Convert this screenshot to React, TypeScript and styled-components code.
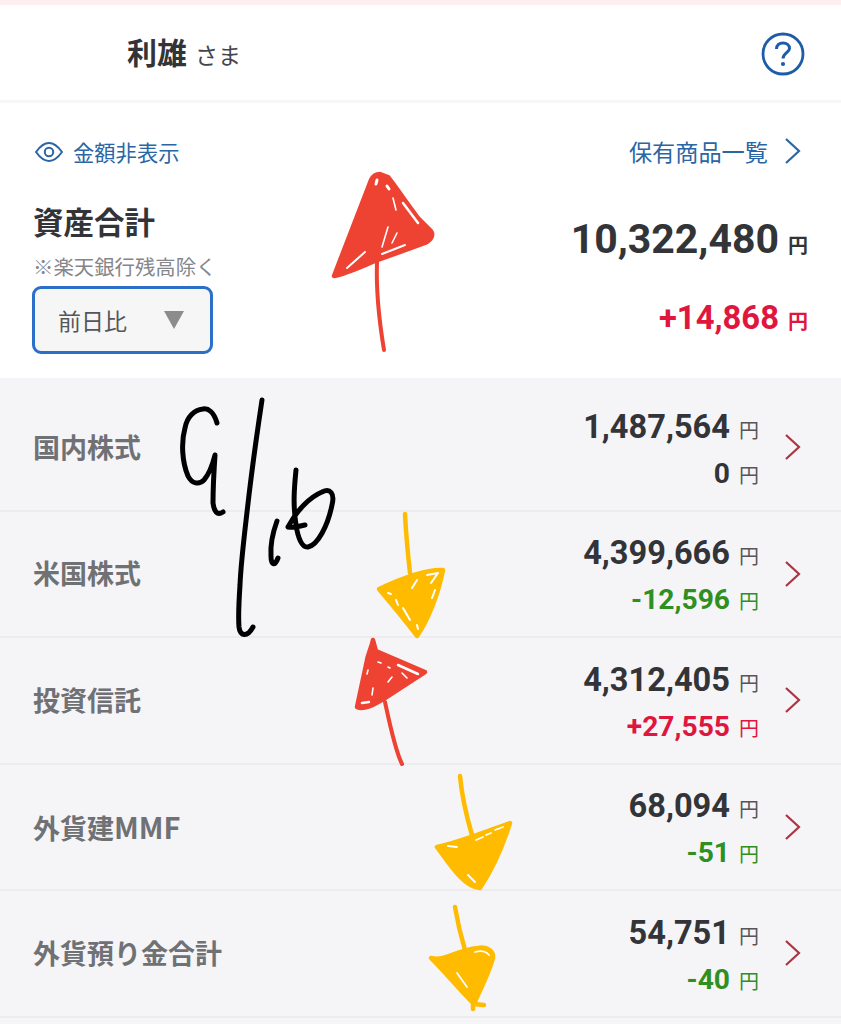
import React from 'react';
import styled, { createGlobalStyle } from 'styled-components';

type Asset = {
  name: string;
  latin?: string;
  amount: string;
  diff: string;
  tone: 'flat' | 'up' | 'down';
};

const assets: Asset[] = [
  { name: '国内株式', amount: '1,487,564', diff: '0', tone: 'flat' },
  { name: '米国株式', amount: '4,399,666', diff: '-12,596', tone: 'down' },
  { name: '投資信託', amount: '4,312,405', diff: '+27,555', tone: 'up' },
  { name: '外貨建', latin: 'MMF', amount: '68,094', diff: '-51', tone: 'down' },
  { name: '外貨預り金合計', amount: '54,751', diff: '-40', tone: 'down' },
];

const toneColors = { flat: '#333438', up: '#e0163f', down: '#2f8f1f' };

const GlobalStyle = createGlobalStyle`
  html, body {
    margin: 0;
    padding: 0;
    background: #f5f5f8;
  }
  body {
    font-family: Roboto, "Noto Sans CJK JP", sans-serif;
  }
`;

const Page = styled.div`
  position: relative;
  width: 841px;
  height: 1024px;
  overflow: hidden;
  background: #f5f5f8;
`;

const TopStripe = styled.div`
  height: 5px;
  background: #fdeef0;
`;

const Header = styled.header`
  display: flex;
  align-items: center;
  justify-content: space-between;
  height: 95px;
  padding: 0 36px 0 127px;
  background: #fff;
  border-bottom: 3px solid #f7f7f7;
`;

const UserName = styled.div`
  display: flex;
  align-items: baseline;
  gap: 8px;
  margin-top: -3px;
  color: #333438;
`;

const Surname = styled.span`
  font-size: 30px;
  font-weight: 700;
  font-family: "Noto Sans CJK JP", sans-serif;
`;

const Honorific = styled.span`
  font-size: 23px;
  color: #44454a;
  font-family: "Noto Sans CJK JP", sans-serif;
`;

const HelpIcon = styled.svg`
  margin-top: 2px;
`;

const Summary = styled.section`
  background: #fff;
  height: 275px;
  padding: 34px 33px 0;
  box-sizing: border-box;
`;

const LinkRow = styled.div`
  display: flex;
  justify-content: space-between;
  align-items: center;
  height: 28px;
`;

const BlueLink = styled.a`
  display: flex;
  align-items: center;
  color: #2a65a5;
  font-size: 21.3px;
  font-family: "Noto Sans CJK JP", sans-serif;
`;

const WideLink = styled(BlueLink)`
  font-size: 23.2px;
  gap: 16px;
  margin-right: 7px;
`;

const EyeIcon = styled.svg`
  width: 30px;
  height: 22px;
  margin: 1px 9px 0 1px;
`;

const TotalBody = styled.div`
  display: flex;
  justify-content: space-between;
  margin-top: 35px;
`;

const TotalLeft = styled.div`
  display: flex;
  flex-direction: column;
  align-items: flex-start;
`;

const TotalTitle = styled.h2`
  margin: 0;
  font-size: 30.5px;
  line-height: 42px;
  font-weight: 700;
  color: #333438;
  font-family: "Noto Sans CJK JP", sans-serif;
`;

const TotalNote = styled.p`
  margin: 10px 0 0;
  font-size: 20.4px;
  line-height: 28px;
  color: #85868a;
  font-family: "Noto Sans CJK JP", sans-serif;
`;

const PeriodSelect = styled.div`
  display: flex;
  align-items: center;
  justify-content: space-between;
  box-sizing: border-box;
  width: 181px;
  height: 68px;
  margin: 6px 0 0 -1px;
  padding: 0 26px 0 23px;
  background: #f6f6f7;
  border: 3px solid #2b6fc8;
  border-radius: 9px;
  color: #55565a;
  font-size: 23px;
  font-family: "Noto Sans CJK JP", sans-serif;
`;

const SelectCaret = styled.span`
  width: 0;
  height: 0;
  border-left: 10px solid transparent;
  border-right: 10px solid transparent;
  border-top: 18px solid #8c8c8e;
`;

const TotalRight = styled.div`
  display: flex;
  flex-direction: column;
  align-items: flex-end;
  margin-top: 14px;
  gap: 27px;
`;

const Money = styled.div<{ $size: number; $color: string }>`
  display: flex;
  align-items: baseline;
  gap: 9px;
  font-size: ${(p) => p.$size}px;
  line-height: ${(p) => Math.round(p.$size) + 9}px;
  font-weight: 700;
  color: ${(p) => p.$color};
`;

const Yen = styled.span<{ $bold?: boolean; $color?: string }>`
  font-size: 20px;
  font-weight: ${(p) => (p.$bold ? 700 : 400)};
  color: ${(p) => p.$color || 'inherit'};
  font-family: "Noto Sans CJK JP", sans-serif;
`;

const AssetList = styled.ul`
  list-style: none;
  margin: 0;
  padding: 7px 0 0;
`;

const AssetRow = styled.li`
  display: flex;
  align-items: center;
  justify-content: space-between;
  box-sizing: border-box;
  height: 126.5px;
  padding: 0 40px 0 33px;
  border-bottom: 2px solid #ececee;
`;

const AssetName = styled.span`
  margin-top: -2px;
  font-size: 27px;
  font-weight: 700;
  color: #707175;
  font-family: "Noto Sans CJK JP", sans-serif;
`;

const AssetLatin = styled.span`
  font-size: 29px;
`;

const AssetRight = styled.div`
  display: flex;
  align-items: center;
  gap: 25px;
`;

const AssetValues = styled.div`
  display: flex;
  flex-direction: column;
  align-items: flex-end;
  gap: 4px;
  padding-top: 4px;
`;

const Annotation = styled.svg`
  position: absolute;
  left: 0;
  top: 0;
  width: 841px;
  height: 1024px;
  pointer-events: none;
`;

const Chevron = ({ color }: { color: string }) => (
  <svg width="17" height="28" viewBox="0 0 17 28" fill="none">
    <path d="M2 2 L15 14 L2 26" stroke={color} strokeWidth="2.2" />
  </svg>
);

const Scribbles = () => (
  <Annotation viewBox="0 0 841 1024" fill="none" strokeLinecap="round" strokeLinejoin="round">
    {/* black date */}
    <g stroke="#000" strokeWidth="5">
      <path d="M217 423 C214 412 208 408 203 409 C194 410 187 417 185 428 C181 442 182 462 188 476 C192 484 199 485 204 480 C210 473 213 463 215 455 C214 470 213 490 213 503 C214 511 217 516 223 512" />
      <path d="M262 400 C256 440 252 470 249 495 C245 530 241 560 240 585 C239 600 238 615 239 627 C240 636 247 638 253 627" />
      <path d="M277 521 C273 532 270 542 271 556 C271 566 275 566 278 558" />
      <path d="M296 470 C294 490 293 505 296 525 C298 538 302 548 308 547 C318 545 328 525 332 505 C335 493 330 488 322 492 C310 497 297 510 288 527 C295 528 300 526 305 525" />
    </g>
    {/* big red arrow */}
    <g stroke="#ee4232">
      <path d="M377 262 C376 290 379 320 384 350" strokeWidth="4" />
      <path d="M380 174 C376 174 373 176 371 180 L334 276 C345 274 358 268 375 261 L425 243 C431 240 434 235 431 231 L418 218 C408 205 396 187 388 177 Z" fill="#ee4232" strokeWidth="4.5" />
      <g stroke="#fff">
        <path d="M377 180 L376 184 M387 186 L389 189" strokeWidth="3" />
        <path d="M403 203 L418 223" strokeWidth="2.5" />
        <path d="M393 198 L396 210 M388 227 L382 247 M397 233 L392 243" strokeWidth="1.6" />
        <path d="M405 245 L382 254 M365 252 L347 268" strokeWidth="2" />
      </g>
    </g>
    {/* yellow arrow, 米国株式 */}
    <g stroke="#ffbb00">
      <path d="M405 514 C406 535 408 555 410 573" strokeWidth="4.5" />
      <path d="M379 589 C398 580 425 569 443 570 C438 595 428 620 417 636 C405 620 390 602 379 589 Z" fill="#ffbb00" strokeWidth="4.5" />
      <g stroke="#fff">
        <path d="M388 593 L391 594 M396 600 L398 605 M403 608 L410 620 M417 625 L418 629" strokeWidth="2" />
        <path d="M417 580 L412 588 M427 575 L438 573 L431 583 M435 590 L432 598" strokeWidth="2" />
      </g>
    </g>
    {/* red arrow, 投資信託 */}
    <g stroke="#ee4232">
      <path d="M385 702 C390 725 395 750 402 764" strokeWidth="4" />
      <path d="M373 640 C371 650 368 652 366 665 L357 707 C363 710 372 706 385 698 L425 672 L390 657 L376 651 Z" fill="#ee4232" strokeWidth="4.5" />
      <g stroke="#fff">
        <path d="M398 665 L418 674" strokeWidth="2.5" />
        <path d="M378 662 L381 663 M388 667 L390 668 M392 677 L388 682 M402 673 L407 678 M373 688 L372 695 M368 670 L367 674" strokeWidth="1.6" />
        <path d="M362 703 L369 702" strokeWidth="2.5" />
      </g>
    </g>
    {/* yellow arrow, 外貨建MMF */}
    <g stroke="#ffbb00">
      <path d="M460 776 C462 798 467 818 472 835" strokeWidth="4.5" />
      <path d="M437 847 C460 842 490 830 510 823 C503 845 492 870 480 888 C465 888 450 865 437 847 Z" fill="#ffbb00" strokeWidth="4.5" />
      <path d="M448 846 L457 847 M476 840 L483 837 M486 835 L491 833 M495 830 L503 827 M468 875 L475 882" stroke="#fff" strokeWidth="1.8" />
    </g>
    {/* yellow arrow, 外貨預り金合計 */}
    <g stroke="#ffbb00">
      <path d="M455 907 C458 925 462 940 465 950" strokeWidth="4.5" />
      <path d="M431 958 C445 962 455 950 478 948 C488 946 494 952 493 958 C488 975 480 990 474 1004 C460 990 445 972 431 958 Z" fill="#ffbb00" strokeWidth="4.5" />
      <path d="M473 1004 L473 1009 M473 1004 L484 1005" strokeWidth="4.5" />
      <path d="M475 952 C482 950 487 952 489 955 M457 973 L467 987" stroke="#fff" strokeWidth="1.8" />
    </g>
  </Annotation>
);

const App = () => {
  return (
    <Page>
      <GlobalStyle />
      <TopStripe />
      <Header>
        <UserName>
          <Surname>利雄</Surname>
          <Honorific>さま</Honorific>
        </UserName>
        <HelpIcon width="44" height="44" viewBox="0 0 44 44" fill="none">
          <circle cx="22" cy="22" r="20" stroke="#1c5ca8" strokeWidth="2.8" />
          <path d="M15.5 17 C15.5 13 18.5 11 22 11 C25.5 11 28.5 13 28.5 16.5 C28.5 20.5 22 21 22 26.5" stroke="#1c5ca8" strokeWidth="3" />
          <circle cx="22" cy="32" r="2.1" fill="#1c5ca8" />
        </HelpIcon>
      </Header>
      <Summary>
        <LinkRow>
          <BlueLink>
            <EyeIcon viewBox="0 0 30 22" fill="none">
              <path d="M2 11 C7 4 11 2 15 2 C19 2 23 4 28 11 C23 18 19 20 15 20 C11 20 7 18 2 11 Z" stroke="#2a65a5" strokeWidth="2" />
              <circle cx="15" cy="11" r="4.2" stroke="#2a65a5" strokeWidth="2" />
            </EyeIcon>
            金額非表示
          </BlueLink>
          <WideLink>
            保有商品一覧
            <Chevron color="#2a65a5" />
          </WideLink>
        </LinkRow>
        <TotalBody>
          <TotalLeft>
            <TotalTitle>資産合計</TotalTitle>
            <TotalNote>※楽天銀行残高除く</TotalNote>
            <PeriodSelect>
              前日比
              <SelectCaret />
            </PeriodSelect>
          </TotalLeft>
          <TotalRight>
            <Money $size={41} $color="#333438">
              10,322,480
              <Yen $bold>円</Yen>
            </Money>
            <Money $size={32.8} $color="#e0163f">
              +14,868
              <Yen $bold>円</Yen>
            </Money>
          </TotalRight>
        </TotalBody>
      </Summary>
      <AssetList>
        {assets.map((asset) => (
          <AssetRow key={asset.name}>
            <AssetName>
              {asset.name}
              {asset.latin && <AssetLatin>{asset.latin}</AssetLatin>}
            </AssetName>
            <AssetRight>
              <AssetValues>
                <Money $size={32.6} $color="#333438">
                  {asset.amount}
                  <Yen $color="#55565a">円</Yen>
                </Money>
                <Money $size={28.2} $color={toneColors[asset.tone]}>
                  {asset.diff}
                  <Yen $color={asset.tone === 'flat' ? '#55565a' : toneColors[asset.tone]}>円</Yen>
                </Money>
              </AssetValues>
              <Chevron color="#ab3442" />
            </AssetRight>
          </AssetRow>
        ))}
      </AssetList>
      <Scribbles />
    </Page>
  );
};

export default App;
